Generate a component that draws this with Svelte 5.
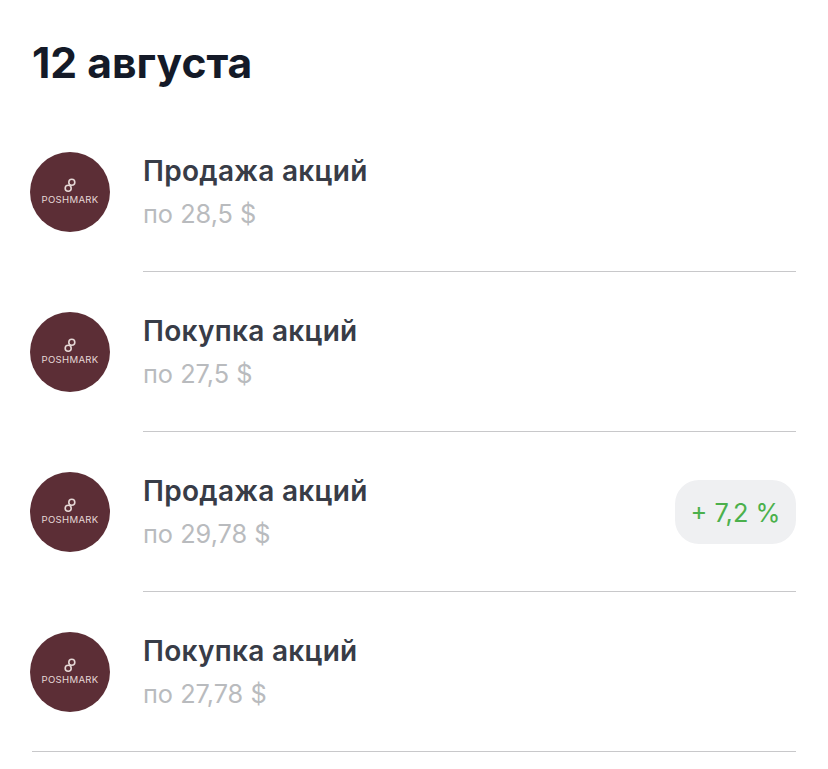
<script lang="ts">
	const deals = [
		{ title: 'Продажа акций', price: 'по 28,5 $' },
		{ title: 'Покупка акций', price: 'по 27,5 $' },
		{ title: 'Продажа акций', price: 'по 29,78 $', profit: '+ 7,2 %' },
		{ title: 'Покупка акций', price: 'по 27,78 $' }
	];
</script>

<main class="page">
	<h1>12 августа</h1>
	<ul class="deals">
		{#each deals as deal}
			<li class="deal">
				<div class="logo">
					<svg width="14" height="15" viewBox="0 0 14 15" fill="none" stroke="#e6d8d6" stroke-width="1.6">
						<circle cx="8.8" cy="4.2" r="3" />
						<circle cx="5.2" cy="10.2" r="3" />
					</svg>
					<span>POSHMARK</span>
				</div>
				<div class="body">
					<div class="info">
						<div class="title">{deal.title}</div>
						<div class="price">{deal.price}</div>
					</div>
					{#if deal.profit}
						<div class="profit">{deal.profit}</div>
					{/if}
				</div>
			</li>
		{/each}
	</ul>
</main>

<style>
	:global(body) {
		background: #fff;
	}

	.page {
		box-sizing: border-box;
		width: 828px;
		height: 769px;
		overflow: hidden;
		padding: 0 32px 0 30px;
		font-family: Inter, 'Noto Sans', sans-serif;
	}

	h1 {
		margin: 0;
		padding: 38px 0 0 2px;
		height: 112px;
		box-sizing: border-box;
		font-size: 42.6px;
		line-height: 50px;
		font-weight: 700;
		color: #141a28;
	}

	.deals {
		list-style: none;
		margin: 0;
		padding: 0;
	}

	.deal {
		display: flex;
		align-items: flex-start;
		gap: 33px;
		height: 160px;
		box-sizing: border-box;
		padding-top: 40px;
		position: relative;
	}

	.deal:last-child::after {
		content: '';
		position: absolute;
		left: 2px;
		right: 0;
		bottom: 0;
		border-bottom: 1px solid #c8c8ca;
	}

	.logo {
		flex: none;
		width: 80px;
		height: 80px;
		border-radius: 50%;
		background: #5c2e36;
		display: flex;
		flex-direction: column;
		align-items: center;
		padding-top: 26px;
		box-sizing: border-box;
		gap: 1px;
		color: #e6d8d6;
	}

	.logo svg {
		display: block;
	}

	.logo span {
		font-size: 9.6px;
		line-height: 11px;
		letter-spacing: 0.3px;
	}

	.body {
		flex: 1;
		height: 160px;
		box-sizing: border-box;
		margin-top: -40px;
		padding-top: 40px;
		display: flex;
		justify-content: space-between;
		border-bottom: 1px solid #c8c8ca;
	}

	.deal:last-child .body {
		border-bottom: 0;
	}

	.title {
		font-size: 28px;
		line-height: 38px;
		font-weight: 600;
		letter-spacing: 0.3px;
		color: #383c47;
	}

	.price {
		margin-top: 8px;
		font-size: 25.3px;
		line-height: 32px;
		color: #b9bbbe;
	}

	.profit {
		margin-top: 8px;
		width: 121px;
		height: 64px;
		border-radius: 24px;
		background: #eff0f2;
		color: #4bb04c;
		font-size: 25.4px;
		display: flex;
		align-items: center;
		justify-content: center;
	}
</style>
